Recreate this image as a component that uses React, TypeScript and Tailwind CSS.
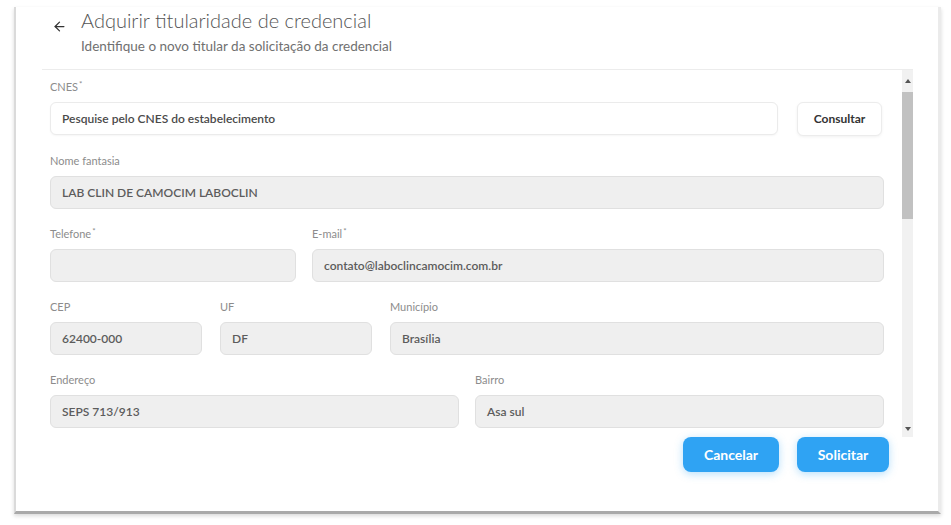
import { ArrowLeft } from "lucide-react";

type FieldProps = {
  label: string;
  value?: string;
  required?: boolean;
  className?: string;
};

const Label = ({ label, required }: { label: string; required?: boolean }) => (
  <span className="mb-[8px] block h-[14px] text-[11px] leading-[14px] text-[#8c8c8c]">
    {label}
    {required && <sup className="ml-[1px] text-[8px]">*</sup>}
  </span>
);

const ReadOnlyField = ({ label, value, required, className }: FieldProps) => (
  <div className={`flex flex-col ${className ?? ""}`}>
    <Label label={label} required={required} />
    <div className="flex h-[33px] items-center rounded-[6px] border border-[#e0e0e0] bg-[#efefef] px-[11px] text-[12px] font-semibold text-[#5c5c5c]">
      {value}
    </div>
  </div>
);

const App = () => {
  return (
    <div className="relative h-[525px] w-[951px] overflow-hidden bg-white font-['Lato',_'Liberation_Sans',_sans-serif]">
      <div className="ml-[14px] mt-[7px] flex h-[507px] w-[927px] flex-col border-b-[3px] border-l-2 border-r-[3px] border-b-[#a9a9a9] border-l-[#dadada] border-r-[#ebebeb] bg-white shadow-[0_2px_4px_rgba(0,0,0,0.15)]">
        {/* header */}
        <div className="flex h-[62px] items-start pl-[36px]">
          <ArrowLeft size={15} strokeWidth={2} className="mt-[12px] text-[#333]" />
          <div className="ml-[14px] flex flex-col">
            <h1 className="text-[20px] font-light leading-[26px] text-[#555]">
              Adquirir titularidade de credencial
            </h1>
            <p className="mt-[5px] text-[13.5px] leading-[16px] text-[#707070]">
              Identifique o novo titular da solicitação da credencial
            </p>
          </div>
        </div>

        {/* scrollable form */}
        <div className="ml-[26px] flex h-[368px] w-[871px] border-t border-[#ececec]">
          <div className="flex flex-1 flex-col gap-[18px] overflow-hidden pl-[8px] pr-[18px] pt-[10px]">
            <div className="flex flex-col">
              <Label label="CNES" required />
              <div className="flex gap-[19px]">
                <div className="flex h-[33px] flex-1 items-center rounded-[6px] border border-[#ebebeb] bg-white px-[11px] text-[12px] font-semibold text-[#4a4a4a] shadow-[0_1px_2px_rgba(0,0,0,0.04)]">
                  Pesquise pelo CNES do estabelecimento
                </div>
                <button className="mr-[2px] h-[34px] w-[85px] rounded-[6px] border border-[#ececec] bg-white text-[12px] font-bold text-[#333] shadow-[0_1px_3px_rgba(0,0,0,0.06)]">
                  Consultar
                </button>
              </div>
            </div>

            <ReadOnlyField label="Nome fantasia" value="LAB CLIN DE CAMOCIM LABOCLIN" />

            <div className="flex gap-[16px]">
              <ReadOnlyField label="Telefone" required className="w-[246px]" />
              <ReadOnlyField
                label="E-mail"
                required
                value="contato@laboclincamocim.com.br"
                className="flex-1"
              />
            </div>

            <div className="flex gap-[18px]">
              <ReadOnlyField label="CEP" value="62400-000" className="w-[152px]" />
              <ReadOnlyField label="UF" value="DF" className="w-[152px]" />
              <ReadOnlyField label="Município" value="Brasília" className="flex-1" />
            </div>

            <div className="flex gap-[16px]">
              <ReadOnlyField label="Endereço" value="SEPS 713/913" className="flex-1" />
              <ReadOnlyField label="Bairro" value="Asa sul" className="flex-1" />
            </div>
          </div>

          {/* scrollbar */}
          <div className="flex w-[11px] flex-col bg-[#f1f1f1]">
            <div className="flex h-[22px] items-center justify-center">
              <span className="h-0 w-0 border-x-[3px] border-b-[4px] border-x-transparent border-b-[#555]" />
            </div>
            <div className="h-[127px] bg-[#c1c1c1]" />
            <div className="flex-1" />
            <div className="flex h-[16px] items-center justify-center">
              <span className="h-0 w-0 border-x-[3px] border-t-[4px] border-x-transparent border-t-[#555]" />
            </div>
          </div>
        </div>

        {/* footer */}
        <div className="flex justify-end gap-[18px] pr-[49px]">
          <button className="h-[35px] w-[96px] rounded-[8px] bg-[#2fa3f3] text-[14px] font-bold text-white shadow-[0_2px_8px_rgba(47,163,243,0.35)]">
            Cancelar
          </button>
          <button className="h-[35px] w-[92px] rounded-[8px] bg-[#2fa3f3] text-[14px] font-bold text-white shadow-[0_2px_8px_rgba(47,163,243,0.35)]">
            Solicitar
          </button>
        </div>
      </div>
    </div>
  );
};

export default App;
